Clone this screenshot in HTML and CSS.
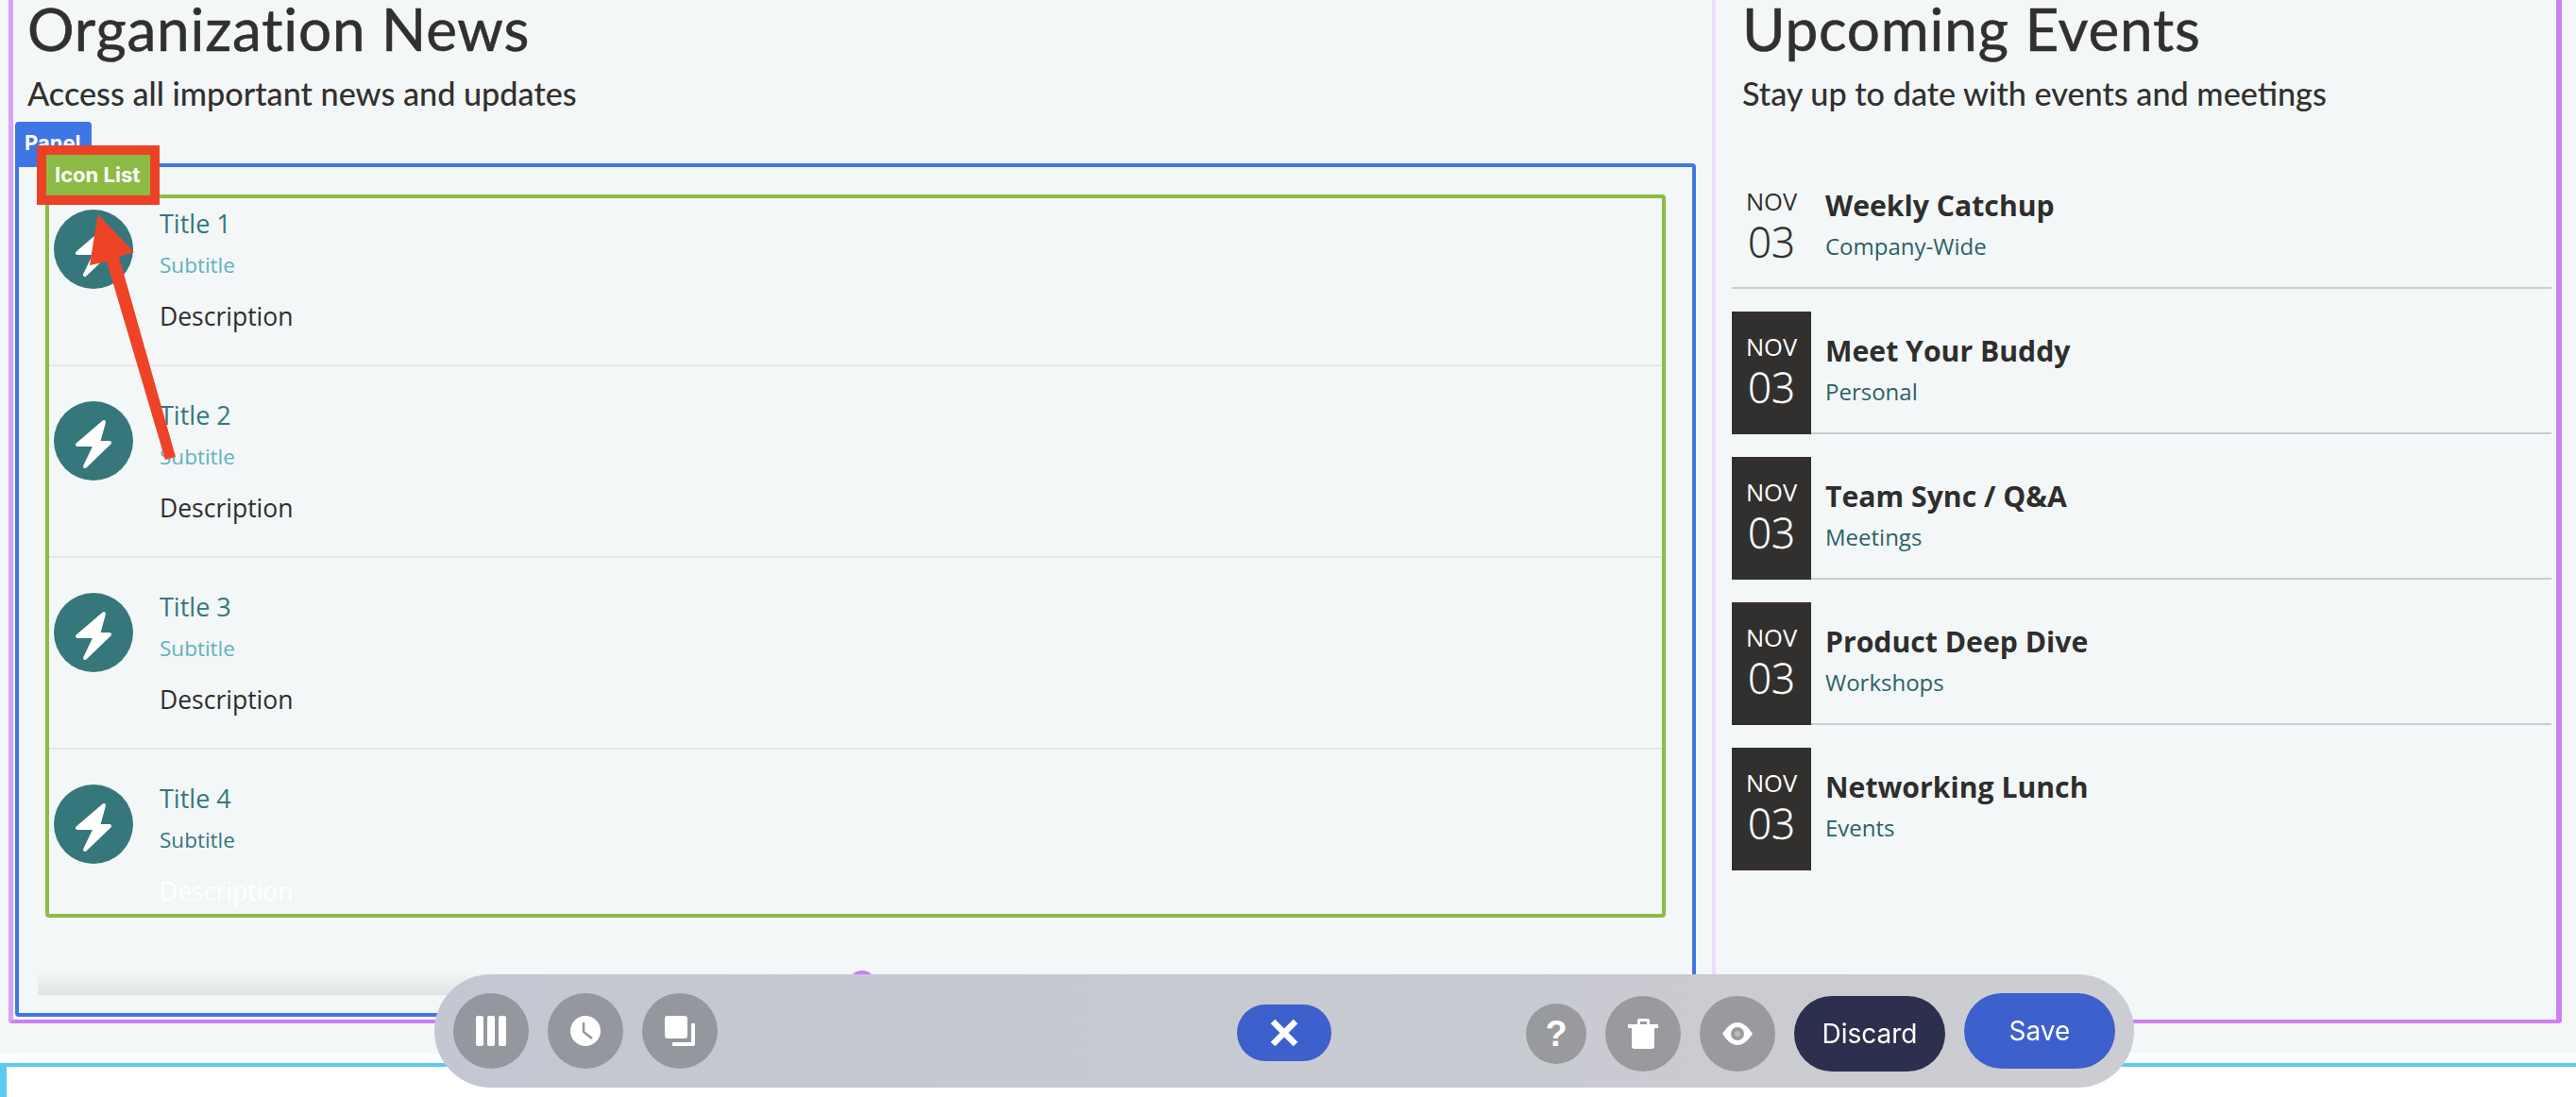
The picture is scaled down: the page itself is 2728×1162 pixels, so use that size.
FILE: index.html
```html
<!DOCTYPE html>
<html>
  <head>
    <title>Organization News</title>
    <link rel="stylesheet" href="styles.css">
  </head>
  <body>
    <div class="section">
      <div class="frame">
        <div class="news">
          <div class="head">
            <h1>Organization News</h1>
            <p class="lead">Access all important news and updates</p>
          </div>
          <div class="panel">
            <span class="panelTag">Panel</span>
            <span class="listTag">Icon List</span>
            <div class="iconList">
              <div class="listRow">
                <svg class="bolt" viewBox="0 0 84 84"><path d="M53 22 25 46H44L33 69 59 44H47Z"/></svg>
                <div class="listText">
                  <div class="listTitle">Title 1</div>
                  <div class="listSub">Subtitle</div>
                  <div class="listDesc">Description</div>
                </div>
              </div>
              <div class="listRow">
                <svg class="bolt" viewBox="0 0 84 84"><path d="M53 22 25 46H44L33 69 59 44H47Z"/></svg>
                <div class="listText">
                  <div class="listTitle">Title 2</div>
                  <div class="listSub">Subtitle</div>
                  <div class="listDesc">Description</div>
                </div>
              </div>
              <div class="listRow">
                <svg class="bolt" viewBox="0 0 84 84"><path d="M53 22 25 46H44L33 69 59 44H47Z"/></svg>
                <div class="listText">
                  <div class="listTitle">Title 3</div>
                  <div class="listSub">Subtitle</div>
                  <div class="listDesc">Description</div>
                </div>
              </div>
              <div class="listRow hovered">
                <svg class="bolt" viewBox="0 0 84 84"><path d="M53 22 25 46H44L33 69 59 44H47Z"/></svg>
                <div class="listText">
                  <div class="listTitle">Title 4</div>
                  <div class="listSub">Subtitle</div>
                  <div class="listDesc">Description</div>
                </div>
              </div>
            </div>
            <div class="fade"></div>
            <span class="addDot"></span>
          </div>
        </div>

        <div class="events">
          <div class="head">
            <h1>Upcoming Events</h1>
            <p class="lead">Stay up to date with events and meetings</p>
          </div>
          <div class="eventRow plain">
            <div class="date"><span class="month">NOV</span><span class="day">03</span></div>
            <div class="eventText">
              <div class="eventTitle">Weekly Catchup</div>
              <div class="eventSub">Company-Wide</div>
            </div>
          </div>
          <div class="eventRow">
            <div class="date"><span class="month">NOV</span><span class="day">03</span></div>
            <div class="eventText">
              <div class="eventTitle">Meet Your Buddy</div>
              <div class="eventSub">Personal</div>
            </div>
          </div>
          <div class="eventRow">
            <div class="date"><span class="month">NOV</span><span class="day">03</span></div>
            <div class="eventText">
              <div class="eventTitle">Team Sync / Q&amp;A</div>
              <div class="eventSub">Meetings</div>
            </div>
          </div>
          <div class="eventRow">
            <div class="date"><span class="month">NOV</span><span class="day">03</span></div>
            <div class="eventText">
              <div class="eventTitle">Product Deep Dive</div>
              <div class="eventSub">Workshops</div>
            </div>
          </div>
          <div class="eventRow last">
            <div class="date"><span class="month">NOV</span><span class="day">03</span></div>
            <div class="eventText">
              <div class="eventTitle">Networking Lunch</div>
              <div class="eventSub">Events</div>
            </div>
          </div>
        </div>
      </div>
    </div>

    <div class="nextSection"></div>

    <!-- annotation arrow -->
    <svg class="arrow" width="200" height="500" viewBox="0 0 200 500">
      <path d="M103.500 227 142 267 126 272 186 484 175 487 113 277 95 281Z"/>
    </svg>

    <div class="toolbar">
      <div class="toolGroup">
        <button class="round big">
          <svg viewBox="0 0 32 32"><rect x="0" width="8" height="32" rx="2"/><rect x="12" width="8" height="32" rx="2"/><rect x="24" width="8" height="32" rx="2"/></svg>
        </button>
        <button class="round big">
          <svg viewBox="0 0 32 32"><circle cx="16" cy="16" r="16"/><path class="hand" d="M14 7V17L23 24"/></svg>
        </button>
        <button class="round big">
          <svg viewBox="0 0 32 32"><rect x="0" width="24" height="24" rx="3"/><path d="M28 8H32V30A2 2 0 0 1 30 32H8V28H28Z"/></svg>
        </button>
      </div>
      <button class="closeBtn">
        <svg viewBox="0 0 30 30"><path class="cross" d="M3 3 27 27M27 3 3 27"/></svg>
      </button>
      <div class="toolGroup right">
        <button class="round small">?</button>
        <button class="round big gray">
          <svg viewBox="0 0 32 32"><path d="M10 6V2A2 2 0 0 1 12 0H21A2 2 0 0 1 23 2V6H20V3H13V6Z"/><rect y="6" width="32" height="4"/><path d="M4 10H28V29A3 3 0 0 1 25 32H7A3 3 0 0 1 4 29Z"/></svg>
        </button>
        <button class="round big gray">
          <svg class="eye" viewBox="0 0 32 24"><path d="M0 12C6 3 11 0 16 0S26 3 32 12C26 21 21 24 16 24S6 21 0 12Z"/><circle class="iris" cx="16" cy="12" r="7"/><circle cx="16" cy="12" r="3" opacity=".35"/></svg>
        </button>
        <button class="textBtn discard">Discard</button>
        <button class="textBtn save">Save</button>
      </div>
    </div>
  </body>
</html>
```

FILE: styles.css
```css
*{
  box-sizing: border-box;
}

html, body{
  margin: 0;
  height: 1162px;
  overflow: hidden;
  background: #ffffff;
}

body{
  font-family: "Open Sans", "Noto Sans", sans-serif;
  color: #2f2e2c;
}

.section{
  height: 1116px;
  background: #f3f7f8;
  padding: 0 15px 32px 9px;
}

.frame{
  display: flex;
  height: 1084px;
  border-left: 5px solid #d8a2f8;
  border-right: 6px solid #cc7ff5;
  border-bottom: 4px solid #cc7ff5;
  border-radius: 0 0 4px 4px;
}

.news{
  width: 1799px;
  padding-left: 2px;
}

.events{
  flex: 1;
  border-left: 4px solid #ecdffb;
  padding: 0 5px 0 17px;
}

.head{
  height: 173px;
  padding-left: 13px;
}

.events .head{
  height: 176px;
  padding-left: 11px;
}

h1{
  margin: 0;
  font-family: Lato, "Noto Sans", sans-serif;
  font-size: 62px;
  font-weight: 400;
  line-height: 60px;
  letter-spacing: 0.8px;
  color: #32302e;
  -webkit-text-stroke: 0.6px #32302e;
}

.lead{
  margin: 17px 0 0;
  font-family: Lato, "Noto Sans", sans-serif;
  font-size: 34.200px;
  font-weight: 500;
  line-height: 44px;
  color: #32302e;
}

.panel{
  position: relative;
  height: 904px;
  width: 1780px;
  padding: 29px 28px 0;
  border: 4px solid #3f76e6;
  border-radius: 4px;
}

.panelTag{
  position: absolute;
  left: -4px;
  top: -48px;
  width: 81px;
  height: 48px;
  padding: 10px 0 0 10px;
  background: #3f76e6;
  border-radius: 4px 4px 0 0;
  font-family: Inter, sans-serif;
  font-size: 22px;
  font-weight: 700;
  line-height: 24px;
  color: #ffffff;
}

.listTag{
  position: absolute;
  left: 19px;
  top: -23px;
  width: 130px;
  height: 63px;
  padding-left: 9px;
  background: #8bbb45;
  border: 10px solid #ec4125;
  font-family: Inter, sans-serif;
  font-size: 22px;
  font-weight: 700;
  line-height: 43px;
  white-space: nowrap;
  color: #ffffff;
  z-index: 2;
}

.iconList{
  height: 766px;
  width: 1716px;
  border: 4px solid #8bbb45;
  border-radius: 4px;
}

.listRow{
  display: flex;
  gap: 28px;
  height: 203px;
  padding: 37px 0 0 5px;
  border-bottom: 2px solid #e4e6e8;
}

.listRow:first-child{
  height: 178px;
  padding-top: 12px;
}

.listRow:last-child{
  border-bottom: none;
}

.bolt{
  flex: none;
  width: 84px;
  height: 84px;
  background: #36777c;
  border-radius: 50%;
}

.bolt path{
  fill: #ffffff;
  stroke: #ffffff;
  stroke-width: 4;
  stroke-linejoin: round;
}

.listTitle{
  font-size: 27px;
  line-height: 30px;
  color: #36777c;
}

.listSub{
  margin-top: 12px;
  font-size: 22.500px;
  line-height: 34px;
  color: #5fb3b8;
}

.listDesc{
  margin-top: 17px;
  font-size: 26.500px;
  line-height: 40px;
  color: #2f2e2c;
}

.hovered .listSub{
  color: #36777c;
}

.hovered .listDesc{
  color: #ffffff;
}

.fade{
  height: 24px;
  width: 1735px;
  margin: 58px 0 0 -8px;
  background: linear-gradient(#f3f7f8, #dfe3e4);
}

.addDot{
  position: absolute;
  left: 878px;
  top: 851px;
  width: 30px;
  height: 30px;
  background: #cc7ff5;
  border-radius: 50%;
}

.eventRow{
  display: flex;
  height: 130px;
  margin-bottom: 24px;
  border-bottom: 2px solid #c9cdcf;
}

.eventRow.last{
  border-bottom: none;
}

.date{
  flex: none;
  display: flex;
  flex-direction: column;
  align-items: center;
  justify-content: center;
  width: 84px;
  height: 130px;
  padding-bottom: 5px;
  background: #32302e;
  color: #ffffff;
}

.plain .date{
  background: transparent;
  color: #2f2e2c;
}

.month{
  margin-bottom: 2px;
  font-size: 25.500px;
  line-height: 33px;
}

.day{
  font-size: 44px;
  line-height: 48px;
  font-weight: 300;
  -webkit-text-stroke: 0.4px currentColor;
}

.eventText{
  padding: 22px 0 0 15px;
}

.eventTitle{
  font-family: "Open Sans", sans-serif;
  font-size: 30.200px;
  font-weight: 700;
  line-height: 40px;
  color: #2f2e2c;
}

.eventSub{
  margin-top: 6px;
  font-size: 24px;
  line-height: 34px;
  color: #2b6266;
}

.nextSection{
  height: 60px;
  margin-top: 10px;
  border-top: 4px solid #5ccaf0;
  border-left: 7px solid #5ccaf0;
}

.arrow{
  position: absolute;
  left: 0;
  top: 0;
  z-index: 3;
}

.arrow path{
  fill: #ee4327;
}

/* floating bar */
.toolbar{
  position: fixed;
  left: 460px;
  top: 1032px;
  display: flex;
  align-items: center;
  width: 1800px;
  height: 120px;
  padding: 0 20px;
  background: linear-gradient(90deg, #c4c7d1, #cccdd2);
  border-radius: 60px;
  z-index: 4;
}

.toolGroup{
  display: flex;
  align-items: center;
  gap: 20px;
}

.toolGroup.right{
  margin-left: auto;
}

button{
  display: flex;
  align-items: center;
  justify-content: center;
  padding: 0;
  border: none;
  color: #ffffff;
}

.round{
  background: #95979f;
  border-radius: 50%;
}

.round svg{
  width: 32px;
  height: 32px;
  fill: #ffffff;
}

.round.big{
  width: 80px;
  height: 80px;
}

.round.gray{
  background: #989a9d;
  margin-top: 6px;
}

.round.small{
  width: 64px;
  height: 64px;
  margin-top: 6px;
  background: #989a9d;
  font-family: "Liberation Sans", sans-serif;
  font-size: 38px;
  font-weight: 700;
}

.round svg.eye{
  height: 24px;
}

.iris{
  fill: #989a9d;
}

.hand{
  fill: none;
  stroke: #95979f;
  stroke-width: 2.5;
}

.closeBtn{
  width: 100px;
  height: 60px;
  margin: 4px 0 0 550px;
  background: #3e60cc;
  border-radius: 30px;
}

.closeBtn svg{
  width: 30px;
  height: 30px;
}

.cross{
  fill: none;
  stroke: #ffffff;
  stroke-width: 6.500;
}

.textBtn{
  width: 160px;
  height: 80px;
  border-radius: 40px;
  font-family: Inter, sans-serif;
  font-size: 28px;
}

.discard{
  margin-top: 6px;
  background: #2c2f4d;
}

.save{
  background: #3e60cc;
}
```
